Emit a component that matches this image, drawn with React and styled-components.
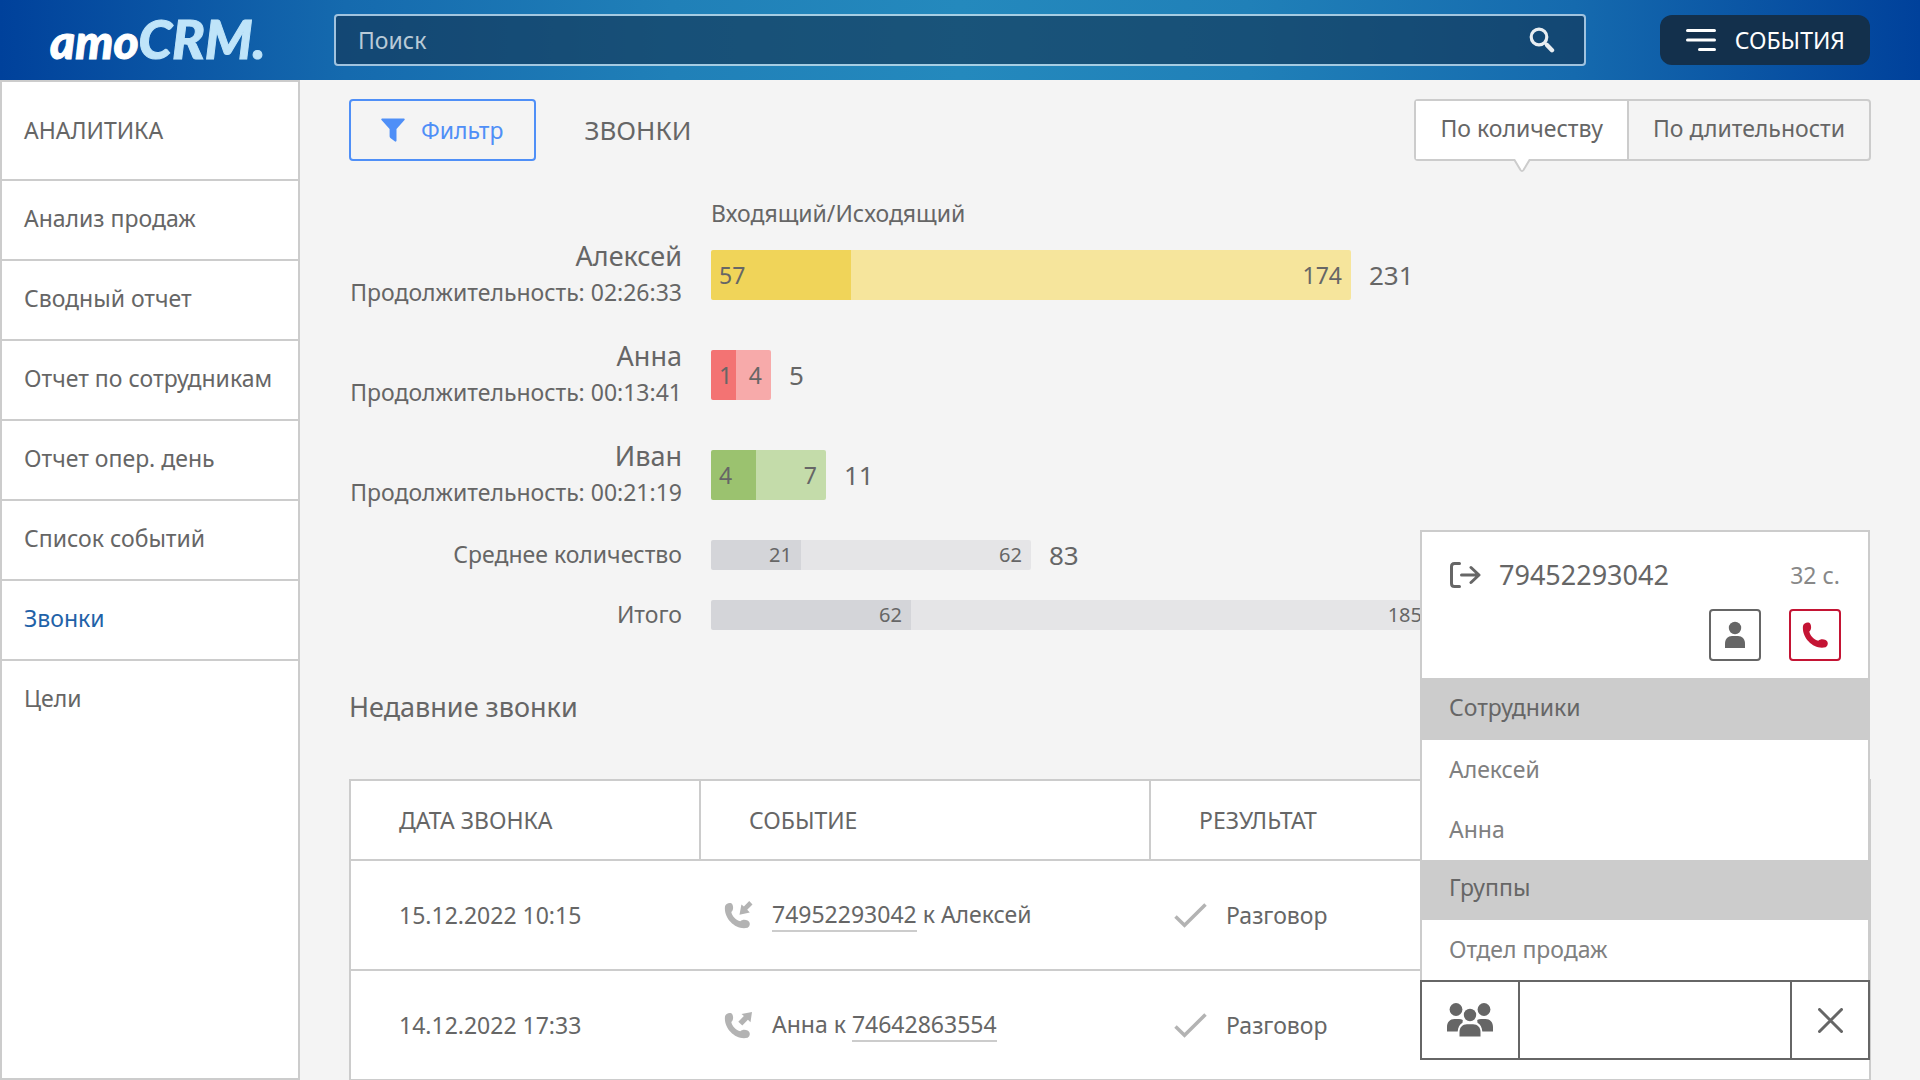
import React from "react";
import styled, { createGlobalStyle, css } from "styled-components";

const INK = "#666";
const MUTED = "#808080";
const LINE = "#ccc";
const BLUE = "#4f8ff7";
const RED = "#c41434";
const NAVY = "#13304c";

const GlobalStyle = createGlobalStyle`
  *, *::before, *::after { box-sizing: border-box; }
  body { margin: 0; }
  body, button, input {
    font-family: "Noto Sans", "Open Sans", sans-serif;
    font-size: 23px;
    line-height: 32px;
    color: ${INK};
  }
  button { padding: 0; border: 0; background: none; cursor: pointer; }
  a { color: inherit; text-decoration: none; }
  h1, h2, ul, p { margin: 0; padding: 0; font-weight: 400; list-style: none; }
  svg { display: block; flex: none; }
`;

const Page = styled.div`
  display: flex;
  flex-direction: column;
  height: 100vh;
  overflow: hidden;
  background: #f4f4f4;
`;

/* ---- top bar ---- */

const TopBar = styled.header`
  display: flex;
  align-items: center;
  flex: none;
  height: 80px;
  padding: 0 50px;
  background: linear-gradient(
    90deg,
    #00419b 0%,
    #156aae 18%,
    #2080b8 35%,
    #2489bd 50%,
    #2080b8 65%,
    #156aae 82%,
    #00419b 100%
  );
`;

const Logo = styled.a`
  flex: none;
  width: 284px;
  font: italic 900 48px/80px Lato, sans-serif;
  color: #fff;
  -webkit-text-stroke: 1px currentColor;
  white-space: nowrap;
`;

const LogoAccent = styled.span`
  font-size: 54px;
  color: #bfe4f9;
`;

const SearchBox = styled.label`
  display: flex;
  align-items: center;
  flex: 1;
  height: 52px;
  padding: 0 29px 0 22px;
  border: 2px solid rgba(255, 255, 255, 0.6);
  border-radius: 4px;
  background: rgba(19, 48, 77, 0.6);
  background-clip: padding-box;
`;

const SearchInput = styled.input`
  flex: 1;
  min-width: 0;
  padding: 0;
  border: 0;
  outline: 0;
  background: none;
  color: #fff;
  &::placeholder {
    color: #b9cad7;
    opacity: 1;
  }
`;

const EventsButton = styled.button`
  display: flex;
  align-items: center;
  gap: 19px;
  height: 50px;
  margin-left: 74px;
  padding: 0 25px 0 26px;
  border-radius: 12px;
  background: ${NAVY};
  color: #fff;
`;

/* ---- side navigation ---- */

const Body = styled.div`
  display: flex;
  flex: 1;
  min-height: 0;
`;

const Sidebar = styled.nav`
  flex: none;
  width: 300px;
  border: 2px solid ${LINE};
  background: #fff;
`;

const SidebarTitle = styled.h2`
  padding: 32px 22px 33px;
  font-size: 23px;
  line-height: 32px;
`;

const SidebarLink = styled.a`
  display: block;
  padding: 21px 22px 25px;
  border-top: 2px solid ${LINE};
  color: ${(p) => (p.$active ? "#1f62a8" : INK)};
  white-space: nowrap;
`;

/* ---- report ---- */

const Content = styled.main`
  display: flex;
  flex-direction: column;
  flex: 1;
  min-width: 0;
  padding: 19px 49px 0;
`;

const Toolbar = styled.div`
  display: flex;
  align-items: center;
`;

const FilterButton = styled.button`
  display: flex;
  align-items: center;
  gap: 16px;
  height: 62px;
  padding: 0 31px 0 30px;
  border: 2px solid ${BLUE};
  border-radius: 4px;
  color: ${BLUE};
`;

const PageTitle = styled.h1`
  margin: 0 auto 0 48px;
  font-size: 26px;
  line-height: 36px;
`;

const Tabs = styled.div`
  display: flex;
  height: 62px;
  border: 2px solid ${LINE};
  border-radius: 4px;
`;

const Tab = styled.button`
  position: relative;
  padding: 0 24px 5px;
  & + & {
    border-left: 2px solid ${LINE};
  }
  ${(p) =>
    p.$active &&
    css`
      background: #fff;
    `}
`;

const TabNotch = styled.svg`
  position: absolute;
  top: 100%;
  left: 50%;
  margin-left: -9px;
`;

const Chart = styled.section`
  display: grid;
  grid-template-columns: 333px 1fr;
  column-gap: 29px;
  margin-top: 40px;
`;

const ChartLegend = styled.p`
  grid-column: 2;
  line-height: 24px;
`;

const RowLabel = styled.div`
  display: flex;
  flex-direction: column;
  align-items: flex-end;
  justify-content: center;
  height: ${(p) => (p.$compact ? 60 : 100)}px;
  padding-bottom: 3px;
  line-height: 36px;
  white-space: nowrap;
`;

const RowName = styled.span`
  font-size: 27px;
`;

const RowBar = styled.div`
  display: flex;
  align-items: center;
  font-size: 26px;
  line-height: 36px;
`;

const Bar = styled.div`
  display: flex;
  height: ${(p) => (p.$compact ? 30 : 50)}px;
  margin-right: 18px;
  border-radius: 2px;
  overflow: hidden;
  font-size: ${(p) => (p.$compact ? 20 : 23)}px;
`;

const Segment = styled.span`
  display: flex;
  align-items: center;
  justify-content: ${(p) => (p.$end ? "flex-end" : "flex-start")};
  flex: none;
  padding: 0 9px 0 8px;
  background: ${(p) => p.$fill};
`;

const SectionTitle = styled.h2`
  margin: 44px 0 54px;
  font-size: 27px;
  line-height: 36px;
`;

const TableCard = styled.div`
  flex: 1;
  min-height: 0;
  overflow: hidden;
  border: 2px solid ${LINE};
  border-bottom: 0;
  background: #fff;
`;

const Table = styled.table`
  width: 100%;
  border-collapse: collapse;
  table-layout: fixed;
  text-align: left;
`;

const HeadCell = styled.th`
  width: ${(p) => p.$width};
  height: 79px;
  padding: 0 48px;
  border-bottom: 2px solid ${LINE};
  font-weight: 400;
  & + & {
    border-left: 2px solid ${LINE};
  }
`;

const Cell = styled.td`
  height: 110px;
  padding: 0 ${(p) => (p.$icon ? 24 : 48)}px;
  border-bottom: 2px solid ${LINE};
`;

const CellContent = styled.div`
  display: flex;
  align-items: center;
  gap: 19px;
  white-space: pre;
`;

const PhoneLink = styled.a`
  display: inline-block;
  border-bottom: 2px solid ${LINE};
`;

/* ---- call widget ---- */

const CallWidget = styled.aside`
  position: fixed;
  right: 50px;
  bottom: 20px;
  width: 450px;
  background: #fff;
`;

const WidgetBody = styled.div`
  border: 2px solid ${LINE};
  border-bottom: 0;
`;

const CallInfo = styled.div`
  display: flex;
  align-items: center;
  gap: 18px;
  padding: 25px 28px 16px;
  line-height: 36px;
`;

const CallNumber = styled.span`
  flex: 1;
  font-size: 27px;
`;

const CallTime = styled.span`
  color: #888;
`;

const CallActions = styled.div`
  display: flex;
  justify-content: flex-end;
  gap: 28px;
  padding: 0 27px 17px;
`;

const SquareButton = styled.button`
  display: grid;
  place-items: center;
  width: 52px;
  height: 52px;
  border: 2px solid currentColor;
  border-radius: 4px;
  color: ${(p) => (p.$danger ? RED : INK)};
`;

const GroupTitle = styled.h2`
  padding: 11px 27px 17px;
  background: ${LINE};
  font-size: 23px;
  line-height: 32px;
  section:first-of-type > & {
    padding-top: 13px;
  }
`;

const GroupItem = styled.button`
  display: block;
  width: 100%;
  height: 60px;
  padding: 0 27px 3px;
  color: ${MUTED};
  text-align: left;
`;

const WidgetFooter = styled.div`
  display: grid;
  grid-template-columns: 96px 1fr 76px;
  height: 80px;
  border: 2px solid ${INK};
`;

const FooterButton = styled.button`
  display: grid;
  place-items: center;
`;

const FooterInput = styled.input`
  min-width: 0;
  padding: 0 16px;
  border: solid ${INK};
  border-width: 0 2px;
  border-radius: 0;
  outline: 0;
  background: #fff;
`;

/* ---- icons ---- */

const SearchIcon = () => (
  <svg width="26" height="26" viewBox="0 0 26 26" fill="none" stroke="#e9eef2">
    <circle cx="10" cy="10" r="7.8" strokeWidth="3.2" />
    <path d="M16 16l2 2" strokeWidth="3" />
    <path d="M18.2 18.2l4.8 5" strokeWidth="4.4" strokeLinecap="round" />
  </svg>
);

const EventsIcon = () => (
  <svg width="30" height="24" viewBox="0 0 30 24" stroke="#fff" strokeWidth="3" strokeLinecap="round">
    <path d="M1.5 2.5h27M1.5 12h27M13.5 21.5h15" />
  </svg>
);

const FilterIcon = () => (
  <svg width="24" height="24" viewBox="0 0 24 24" fill="currentColor">
    <path d="M1.2 0.5h21.6c1 0 1.2.9.7 1.6L15.5 11v11.5c0 1.2-.9 1.5-1.8.8L9.7 20.2c-.7-.6-1.1-1.2-1.1-2.2V11L.5 2.1C0 1.4.2.5 1.2.5z" />
  </svg>
);

const HANDSET =
  "M1 4C1.5.9 6.8-.7 8.4 2 9.6 4.6 9.300 8 7.3 9.6 8 13.600 12 18 16.3 18.7 18 17 21.3 16.7 23.6 18.1 27 20 26 23.6 23.6 25.3 12 28.4-.6 16 1 4z";

const HangUpIcon = () => (
  <svg width="26" height="26" viewBox="0 0 26 26" fill="currentColor">
    <path d={HANDSET} />
  </svg>
);

const CallDirectionIcon = ({ incoming }) => (
  <svg width="29" height="28" viewBox="0 0 29 28" fill="#b3b3b3">
    <g transform="translate(0 1.5)">
      <path d={HANDSET} />
    </g>
    {incoming ? (
      <path d="M25.200 0L28.500 3.400l-5.300 5.400 2.600 2.600-10.300 2.400 1.900-10.400 2.500 2z" />
    ) : (
      <path d="M28 1l-1.5 10.2-2.6-2.4-5.6 5.700-4-3.800 5.600-5.700-2.400-2.100z" />
    )}
  </svg>
);

const CheckIcon = () => (
  <svg width="33" height="25" viewBox="0 0 33 25" fill="none" stroke="#b3b3b3" strokeWidth="3.5">
    <path d="M1.5 13.5l9 8.8L31.5 1.5" />
  </svg>
);

const OutgoingIcon = () => (
  <svg width="31" height="26" viewBox="0 0 31 26" fill="none" stroke="currentColor" strokeWidth="3" strokeLinecap="round" strokeLinejoin="round">
    <path d="M9.5 1.5H4.5Q1.5 1.5 1.5 4.5v17q0 3 3 3h5M11.5 13h17M21 5.5l8 7.5-8 7.5" />
  </svg>
);

const PersonIcon = () => (
  <svg width="20" height="28" viewBox="0 0 20 28" fill="currentColor">
    <circle cx="10" cy="7" r="6.2" />
    <path d="M0 27v-4.5C0 18 3 15 7 15h6c4 0 7 3 7 7.5V27z" />
  </svg>
);

const TeamIcon = () => (
  <svg width="46" height="34" viewBox="0 0 46 34" fill="currentColor">
    <circle cx="9" cy="6.5" r="6.4" />
    <circle cx="37" cy="6.5" r="6.4" />
    <circle cx="23" cy="12" r="6.2" />
    <path d="M0 28.5V24c0-5 3-8 7.5-8h4.5c1.5 0 2.7.3 3.8 1l-.3 2.8c-3 1.6-4.5 4.700-4.8 8.700z" />
    <path d="M46 28.5V24c0-5-3-8-7.5-8H34c-1.5 0-2.7.3-3.8 1l.3 2.8c3 1.6 4.5 4.700 4.8 8.700z" />
    <path d="M12.5 33.5V29c0-4.7 3-7.8 7.5-7.8h6c4.5 0 7.5 3.1 7.5 7.8v4.5z" />
  </svg>
);

const CloseIcon = () => (
  <svg width="25" height="25" viewBox="0 0 25 25" stroke="currentColor" strokeWidth="3" strokeLinecap="round">
    <path d="M1.5 1.5l22 22M23.5 1.5l-22 22" />
  </svg>
);

/* ---- data ---- */

const reports = [
  "Анализ продаж",
  "Сводный отчет",
  "Отчет по сотрудникам",
  "Отчет опер. день",
  "Список событий",
  "Звонки",
  "Цели",
];

const people = [
  { name: "Алексей", time: "02:26:33", values: [57, 174], widths: [140, 500], fills: ["#f0d459", "#f6e59c"], total: 231 },
  { name: "Анна", time: "00:13:41", values: [1, 4], widths: [25, 35], fills: ["#f37373", "#f7aaaa"], total: 5 },
  { name: "Иван", time: "00:21:19", values: [4, 7], widths: [45, 70], fills: ["#9bc26f", "#c4dcaa"], total: 11 },
];

const summary = [
  { name: "Среднее количество", values: [21, 62], widths: [90, 230], total: 83 },
  { name: "Итого", values: [62, 185], widths: [200, 520] },
];

const GREYS = ["#d4d5d9", "#e5e5e7"];

const calls = [
  { date: "15.12.2022 10:15", incoming: true, phone: "74952293042", after: " к Алексей", result: "Разговор" },
  { date: "14.12.2022 17:33", incoming: false, before: "Анна к ", phone: "74642863554", result: "Разговор" },
];

const groups = [
  { title: "Сотрудники", items: ["Алексей", "Анна"] },
  { title: "Группы", items: ["Отдел продаж"] },
];

function StackedBar({ values, widths, fills, total, compact }) {
  return (
    <RowBar>
      <Bar $compact={compact}>
        {values.map((value, i) => (
          <Segment key={i} $fill={fills[i]} $end={compact || i === 1} style={{ width: widths[i] }}>
            {value}
          </Segment>
        ))}
      </Bar>
      {total}
    </RowBar>
  );
}

export default function App() {
  return (
    <Page>
      <GlobalStyle />
      <TopBar>
        <Logo href="#">
          amo<LogoAccent>CRM.</LogoAccent>
        </Logo>
        <SearchBox>
          <SearchInput type="text" placeholder="Поиск" aria-label="Поиск" />
          <SearchIcon />
        </SearchBox>
        <EventsButton type="button">
          <EventsIcon />
          СОБЫТИЯ
        </EventsButton>
      </TopBar>

      <Body>
        <Sidebar>
          <SidebarTitle>АНАЛИТИКА</SidebarTitle>
          <ul>
            {reports.map((name) => (
              <li key={name}>
                <SidebarLink href="#" $active={name === "Звонки"}>
                  {name}
                </SidebarLink>
              </li>
            ))}
          </ul>
        </Sidebar>

        <Content>
          <Toolbar>
            <FilterButton type="button">
              <FilterIcon />
              Фильтр
            </FilterButton>
            <PageTitle>ЗВОНКИ</PageTitle>
            <Tabs>
              <Tab type="button" $active>
                По количеству
                <TabNotch width="18" height="14" viewBox="0 0 18 14">
                  <path d="M1 0h16l-6.5 11q-1.5 2-3 0z" fill="#fff" />
                  <path d="M0 1h1.5l6 10q1.5 2 3 0l6-10H18" fill="none" stroke={LINE} strokeWidth="2" />
                </TabNotch>
              </Tab>
              <Tab type="button">По длительности</Tab>
            </Tabs>
          </Toolbar>

          <Chart>
            <ChartLegend>Входящий/Исходящий</ChartLegend>
            {people.map((row) => (
              <React.Fragment key={row.name}>
                <RowLabel>
                  <RowName>{row.name}</RowName>
                  <span>Продолжительность: {row.time}</span>
                </RowLabel>
                <StackedBar {...row} />
              </React.Fragment>
            ))}
            {summary.map((row) => (
              <React.Fragment key={row.name}>
                <RowLabel $compact>{row.name}</RowLabel>
                <StackedBar {...row} fills={GREYS} compact />
              </React.Fragment>
            ))}
          </Chart>

          <SectionTitle>Недавние звонки</SectionTitle>
          <TableCard>
            <Table>
              <thead>
                <tr>
                  <HeadCell $width="349px">ДАТА ЗВОНКА</HeadCell>
                  <HeadCell $width="450px">СОБЫТИЕ</HeadCell>
                  <HeadCell>РЕЗУЛЬТАТ</HeadCell>
                </tr>
              </thead>
              <tbody>
                {calls.map((call) => (
                  <tr key={call.date}>
                    <Cell>{call.date}</Cell>
                    <Cell $icon>
                      <CellContent>
                        <CallDirectionIcon incoming={call.incoming} />
                        <span>
                          {call.before}
                          <PhoneLink href="#">{call.phone}</PhoneLink>
                          {call.after}
                        </span>
                      </CellContent>
                    </Cell>
                    <Cell $icon>
                      <CellContent>
                        <CheckIcon />
                        {call.result}
                      </CellContent>
                    </Cell>
                  </tr>
                ))}
              </tbody>
            </Table>
          </TableCard>
        </Content>
      </Body>

      <CallWidget>
        <WidgetBody>
          <CallInfo>
            <OutgoingIcon />
            <CallNumber>79452293042</CallNumber>
            <CallTime>32 с.</CallTime>
          </CallInfo>
          <CallActions>
            <SquareButton type="button" aria-label="Контакт">
              <PersonIcon />
            </SquareButton>
            <SquareButton type="button" aria-label="Завершить" $danger>
              <HangUpIcon />
            </SquareButton>
          </CallActions>
          {groups.map((group) => (
            <section key={group.title}>
              <GroupTitle>{group.title}</GroupTitle>
              {group.items.map((item) => (
                <GroupItem type="button" key={item}>
                  {item}
                </GroupItem>
              ))}
            </section>
          ))}
        </WidgetBody>
        <WidgetFooter>
          <FooterButton type="button" aria-label="Сотрудники">
            <TeamIcon />
          </FooterButton>
          <FooterInput type="text" aria-label="Номер" />
          <FooterButton type="button" aria-label="Закрыть">
            <CloseIcon />
          </FooterButton>
        </WidgetFooter>
      </CallWidget>
    </Page>
  );
}
